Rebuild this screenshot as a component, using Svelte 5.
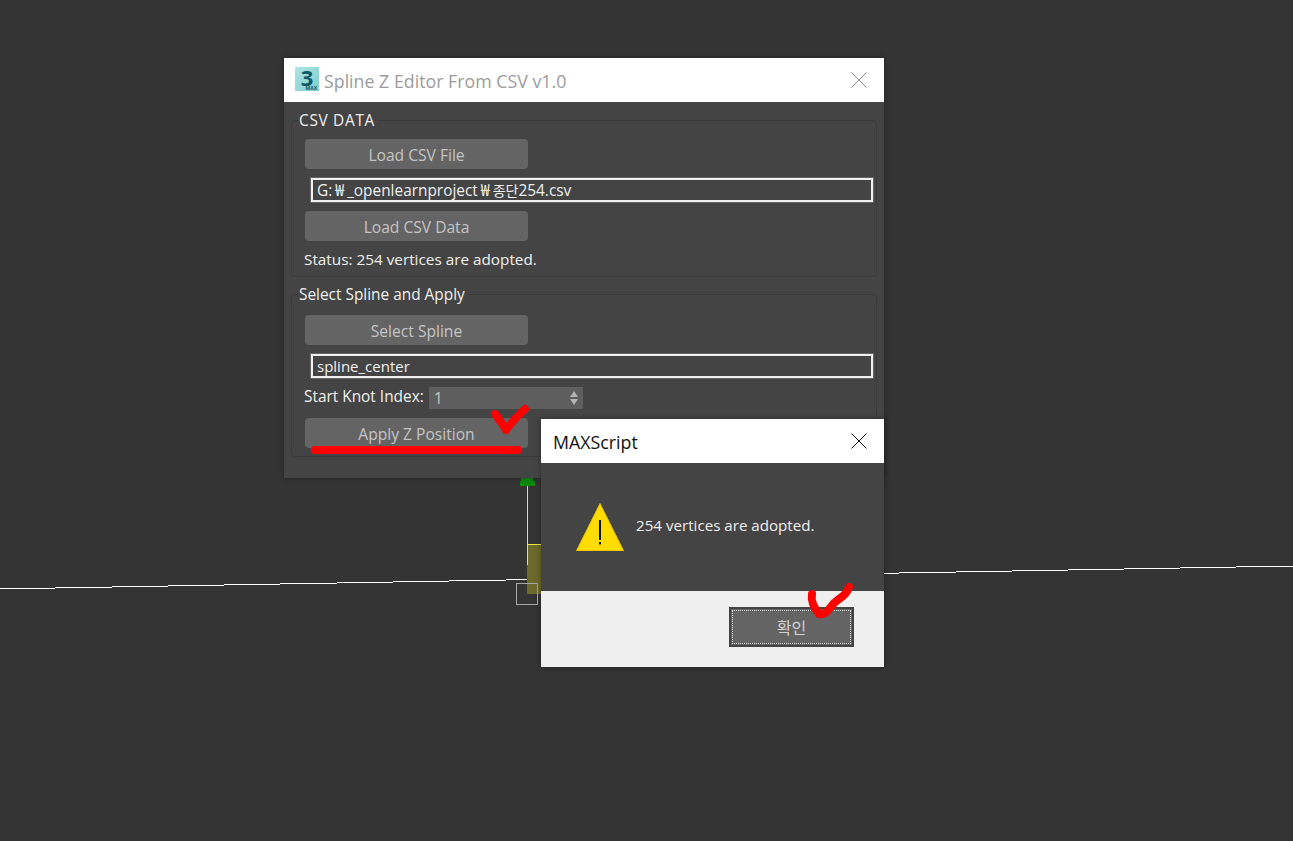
<script>
  let knot = 1;
</script>

<div class="desk">
  <svg class="scene" width="1293" height="841">
    <line x1="0" y1="589" x2="1293" y2="566" stroke="#ffffff" shape-rendering="crispEdges" />
    <rect x="527" y="544" width="14" height="50" fill="#6e6a2c" />
    <line x1="527.5" y1="486" x2="527.5" y2="565" stroke="#f0e83c" />
    <line x1="527" y1="544.5" x2="541" y2="544.5" stroke="#f0e83c" />
    <path d="M521 478h12v3h2v5h-15v-5h1z" fill="#0a8a0a" />
    <rect x="516.5" y="583.5" width="21" height="21" fill="none" stroke="#a8a8a8" />
  </svg>

  <section class="win main">
    <header class="title">
      <div class="logo">
        <span class="three">3</span>
        <span class="maxtag">MAX</span>
      </div>
      <span class="name">Spline Z Editor From CSV v1.0</span>
      <svg class="x" width="16" height="16" viewBox="0 0 16 16"><path d="M.5.5l15 15M15.5.5l-15 15" stroke="#8c8c8c" fill="none" /></svg>
    </header>
    <div class="body">
      <fieldset class="first">
        <legend class="caps"><span>CSV DATA</span></legend>
        <button>Load CSV File</button>
        <div class="field">G:<span class="krw">₩</span>_openlearnproject<span class="krw">₩</span><span class="ko">종단</span>254.csv</div>
        <button class="next">Load CSV Data</button>
        <p class="status">Status: 254 vertices are adopted.</p>
      </fieldset>
      <fieldset class="second">
        <legend><span>Select Spline and Apply</span></legend>
        <button>Select Spline</button>
        <div class="field plain">spline_center</div>
        <div class="knot">
          <span class="lab">Start Knot Index:</span>
          <div class="spin">
            <span>{knot}</span>
            <svg width="10" height="16" viewBox="0 0 10 16"><path d="M5 1l4 6H1zM1 9h8l-4 6z" fill="#b4b4b4" /></svg>
          </div>
        </div>
        <button class="apply">Apply Z Position</button>
      </fieldset>
    </div>
  </section>

  <section class="win msg">
    <header class="title">
      <span class="name dark">MAXScript</span>
      <svg class="x" width="16" height="16" viewBox="0 0 16 16"><path d="M.5.5l15 15M15.5.5l-15 15" stroke="#111" fill="none" /></svg>
    </header>
    <div class="msgbody">
      <svg width="48" height="48" viewBox="0 0 48 48">
        <path d="M24 0l24 48H0z" fill="#ffdd00" />
        <path d="M24 0l24 48H0zM24 1.5L1.2 47.5h45.6z" fill="#e0b800" fill-rule="evenodd" />
        <rect x="23" y="17" width="2" height="20" fill="#111" />
        <rect x="23" y="39" width="2" height="2.500" fill="#111" />
      </svg>
      <span>254 vertices are adopted.</span>
    </div>
    <footer>
      <div class="ok"><span>확인</span></div>
    </footer>
  </section>

  <svg class="marks" width="1293" height="841">
    <path d="M315 450h203" stroke="#ff0000" stroke-width="8" stroke-linecap="round" fill="none" />
    <path d="M495 414l6 8 5 8 4-5 6-7 9-9" stroke="#ff0000" stroke-width="8" stroke-linecap="round" stroke-linejoin="round" fill="none" />
    <path d="M812 594q-1 5 1 10t6 10q3 1 6-1t9-10q5-4 9-7t6-9" stroke="#ff0000" stroke-width="8" stroke-linecap="round" stroke-linejoin="round" fill="none" />
  </svg>
</div>

<style>
  :global(body) { margin: 0; background: #343434; }
  .desk { position: relative; width: 1293px; height: 841px; overflow: hidden; background: #343434; font-family: "Open Sans", "Noto Sans CJK KR", sans-serif; }
  .scene, .marks { position: absolute; left: 0; top: 0; }
  .marks { pointer-events: none; }
  .win { position: absolute; background: #444444; box-shadow: 0 0 6px rgba(0,0,0,0.35); display: flex; flex-direction: column; }
  .main { left: 284px; top: 58px; width: 600px; height: 420px; }
  .msg { left: 541px; top: 419px; width: 343px; height: 248px; }
  .title { height: 44px; background: #fff; display: flex; align-items: center; flex: none; }
  .main .title { padding: 0 17px 0 11px; }
  .msg .title { padding: 0 17px 0 12px; }
  .logo { width: 24px; height: 24px; margin: -2px 5px 0 0; background: linear-gradient(135deg, #b2e5e3, #7dcccf); display: flex; flex-direction: column; align-items: center; font-weight: 700; color: #0c5a68; }
  .three { font-size: 22px; line-height: 18px; height: 18px; margin-top: 1px; }
  .maxtag { font-size: 5px; line-height: 5px; align-self: flex-end; margin-right: 2px; }
  .name { font-size: 17.8px; color: #9c9c9c; flex: 1; margin-top: 1px; }
  .name.dark { color: #111; }
  .x { flex: none; margin-top: -1px; }
  .body { padding: 9px 7px 0; display: flex; flex-direction: column; }
  fieldset { margin: 0; padding: 10px 3px 0 13px; box-sizing: border-box; min-width: 0; border: 1px solid #3b3b3b; border-radius: 4px; }
  .first { height: 166px; }
  .second { margin-top: 8px; height: 172px; padding-top: 12px; }
  legend { padding: 0 3px 0 0; margin-left: -6px; font-size: 15.4px; line-height: 18px; color: #f0f0f0; }
  legend span { position: relative; top: 1px; }
  .caps { letter-spacing: 0.7px; }
  button { display: block; width: 223px; height: 30px; padding: 2px 0 0; background: #646464; border: none; border-radius: 4px; color: #c4c4c4; font: 15.6px "Open Sans", "Noto Sans CJK KR", sans-serif; text-align: center; }
  .field { margin: 9px 0 0 6px; height: 24px; box-sizing: border-box; border: 2px solid #f0f0f0; padding-left: 4px; color: #f0f0f0; font-size: 15.4px; line-height: 20px; box-shadow: 0 0 0 1px #666; white-space: nowrap; }
  .plain { font-size: 15px; }
  .krw { font-size: 16px; padding: 0 3px; }
  .ko { font-size: 14px; }
  .next { margin-top: 9px; }
  .status { margin: 7px 0 0 -1px; font-size: 15.3px; line-height: 22px; color: #f0f0f0; }
  .knot { margin: 9px 0 0 -1px; height: 22px; display: flex; align-items: center; gap: 5px; color: #f0f0f0; font-size: 15.4px; line-height: 20px; }
  .lab { margin-top: -2px; }
  .spin { width: 154px; height: 22px; box-sizing: border-box; background: #5e5e5e; display: flex; align-items: center; justify-content: space-between; padding: 0 4px 0 5px; color: #c4c4c4; font-size: 16px; }
  .apply { margin-top: 9px; }
  .msgbody { height: 128px; box-sizing: border-box; padding: 40px 0 0 35px; display: flex; align-items: flex-start; gap: 12px; color: #eeeeee; font-size: 15.15px; }
  .msgbody span { line-height: 44px; }
  footer { flex: 1; background: #efefef; display: flex; justify-content: flex-end; align-items: flex-start; padding: 16px 30px 0 0; }
  .ok { width: 125px; height: 40px; box-sizing: border-box; background: #646464; border: 2px solid #444; padding: 1px; }
  .ok span { display: flex; align-items: center; justify-content: center; height: 100%; box-sizing: border-box; border: 1px dotted #e8e8e8; color: #d0d0d0; font-size: 16px; }
</style>
